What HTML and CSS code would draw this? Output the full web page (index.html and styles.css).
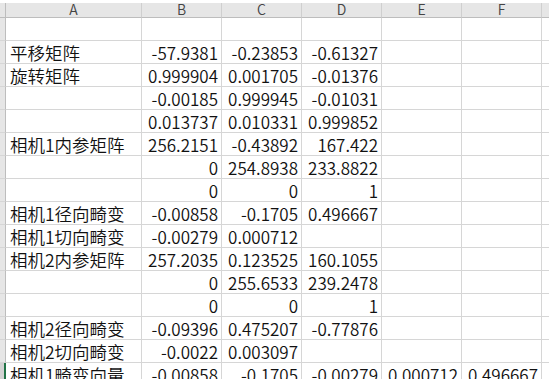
FILE: index.html
```html
<!DOCTYPE html>
<html lang="zh-CN">
<head>
<meta charset="utf-8">
<title>Sheet</title>
<link rel="stylesheet" href="styles.css">
</head>
<body>
<div class="topstrip"></div>
<div class="sheet">
  <div class="row head">
    <div class="c rh"></div>
    <div class="c a">A</div>
    <div class="c n">B</div>
    <div class="c n">C</div>
    <div class="c n">D</div>
    <div class="c n">E</div>
    <div class="c n">F</div>
    <div class="c rest"></div>
  </div>
  <div class="row"><div class="c rh"></div><div class="c a"></div><div class="c n"></div><div class="c n"></div><div class="c n"></div><div class="c n"></div><div class="c n"></div><div class="c rest"></div></div>
  <div class="row"><div class="c rh"></div><div class="c a">平移矩阵</div><div class="c n">-57.9381</div><div class="c n">-0.23853</div><div class="c n">-0.61327</div><div class="c n"></div><div class="c n"></div><div class="c rest"></div></div>
  <div class="row"><div class="c rh"></div><div class="c a">旋转矩阵</div><div class="c n">0.999904</div><div class="c n">0.001705</div><div class="c n">-0.01376</div><div class="c n"></div><div class="c n"></div><div class="c rest"></div></div>
  <div class="row"><div class="c rh"></div><div class="c a"></div><div class="c n">-0.00185</div><div class="c n">0.999945</div><div class="c n">-0.01031</div><div class="c n"></div><div class="c n"></div><div class="c rest"></div></div>
  <div class="row"><div class="c rh"></div><div class="c a"></div><div class="c n">0.013737</div><div class="c n">0.010331</div><div class="c n">0.999852</div><div class="c n"></div><div class="c n"></div><div class="c rest"></div></div>
  <div class="row"><div class="c rh"></div><div class="c a">相机1内参矩阵</div><div class="c n">256.2151</div><div class="c n">-0.43892</div><div class="c n">167.422</div><div class="c n"></div><div class="c n"></div><div class="c rest"></div></div>
  <div class="row"><div class="c rh"></div><div class="c a"></div><div class="c n">0</div><div class="c n">254.8938</div><div class="c n">233.8822</div><div class="c n"></div><div class="c n"></div><div class="c rest"></div></div>
  <div class="row"><div class="c rh"></div><div class="c a"></div><div class="c n">0</div><div class="c n">0</div><div class="c n">1</div><div class="c n"></div><div class="c n"></div><div class="c rest"></div></div>
  <div class="row"><div class="c rh"></div><div class="c a">相机1径向畸变</div><div class="c n">-0.00858</div><div class="c n">-0.1705</div><div class="c n">0.496667</div><div class="c n"></div><div class="c n"></div><div class="c rest"></div></div>
  <div class="row"><div class="c rh"></div><div class="c a">相机1切向畸变</div><div class="c n">-0.00279</div><div class="c n">0.000712</div><div class="c n"></div><div class="c n"></div><div class="c n"></div><div class="c rest"></div></div>
  <div class="row"><div class="c rh"></div><div class="c a">相机2内参矩阵</div><div class="c n">257.2035</div><div class="c n">0.123525</div><div class="c n">160.1055</div><div class="c n"></div><div class="c n"></div><div class="c rest"></div></div>
  <div class="row"><div class="c rh"></div><div class="c a"></div><div class="c n">0</div><div class="c n">255.6533</div><div class="c n">239.2478</div><div class="c n"></div><div class="c n"></div><div class="c rest"></div></div>
  <div class="row"><div class="c rh"></div><div class="c a"></div><div class="c n">0</div><div class="c n">0</div><div class="c n">1</div><div class="c n"></div><div class="c n"></div><div class="c rest"></div></div>
  <div class="row"><div class="c rh"></div><div class="c a">相机2径向畸变</div><div class="c n">-0.09396</div><div class="c n">0.475207</div><div class="c n">-0.77876</div><div class="c n"></div><div class="c n"></div><div class="c rest"></div></div>
  <div class="row"><div class="c rh"></div><div class="c a">相机2切向畸变</div><div class="c n">-0.0022</div><div class="c n">0.003097</div><div class="c n"></div><div class="c n"></div><div class="c n"></div><div class="c rest"></div></div>
  <div class="row sel"><div class="c rh"></div><div class="c a">相机1畸变向量</div><div class="c n">-0.00858</div><div class="c n">-0.1705</div><div class="c n">-0.00279</div><div class="c n">0.000712</div><div class="c n">0.496667</div><div class="c rest"></div></div>
</div>
</body>
</html>
```
FILE: styles.css
```css
html, body {
  margin: 0;
  padding: 0;
  background: #ffffff;
  overflow: hidden;
}
body {
  font-family: "Noto Sans CJK SC", "Noto Sans", sans-serif;
  font-weight: 350;
  color: #111111;
}
.topstrip {
  height: 3px;
  background: #ffffff;
}
.sheet {
  display: flex;
  flex-direction: column;
  width: 560px;
}
.row {
  display: flex;
  height: 23px;
  flex: none;
}
.c {
  box-sizing: border-box;
  height: 100%;
  border-right: 1px solid #d6d6d6;
  border-bottom: 1px solid #d6d6d6;
  font-size: 17px;
  line-height: 21px;
  white-space: nowrap;
  overflow: hidden;
  flex: none;
  display: flex;
  align-items: flex-end;
}
.rh {
  width: 6px;
  background: #e6e6e6;
  border-right-color: #bdbdbd;
}
.a {
  width: 136px;
  padding-left: 4px;
  font-size: 17.5px;
}
.n {
  width: 80px;
  justify-content: flex-end;
  padding-right: 3px;
}
.rest {
  width: 20px;
}
.head {
  height: 15px;
}
.head .c {
  background: #e6e6e6;
  color: #444444;
  font-size: 14px;
  line-height: 14px;
  justify-content: center;
  align-items: flex-end;
  padding: 0 0 1px 0;
  overflow: visible;
  border-bottom-color: #bdbdbd;
  border-right-color: #cfcfcf;
}
.head .rh {
  border-right-color: #bdbdbd;
}
.sel .rh {
  background: #d2d2d2;
  border-right: 2px solid #217346;
}
```
